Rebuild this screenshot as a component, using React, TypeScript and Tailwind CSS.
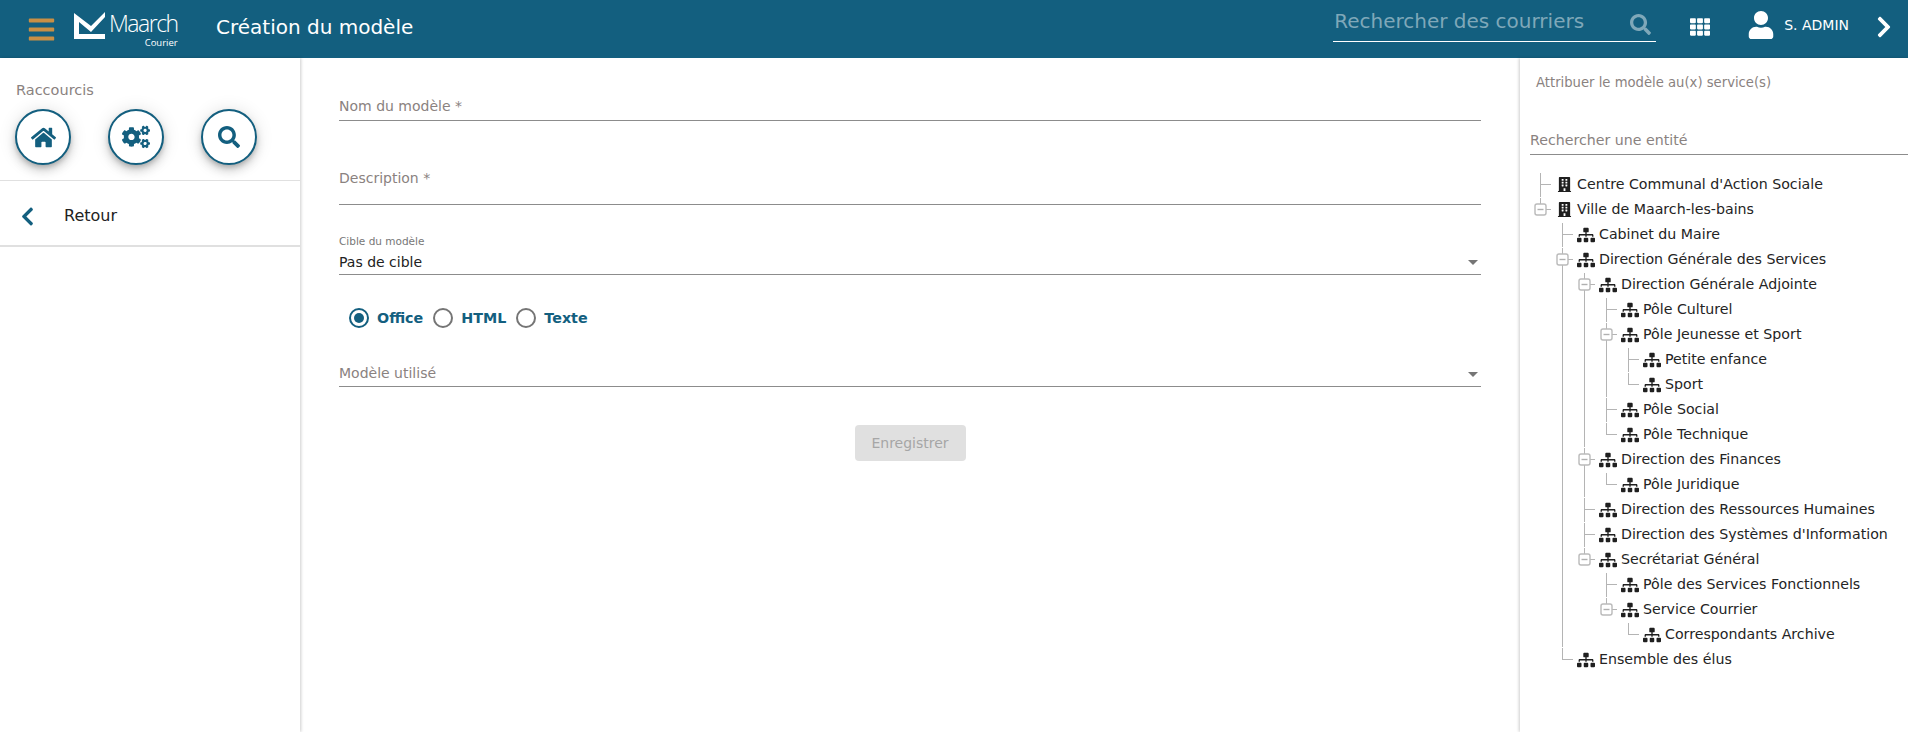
import React from "react";
import { FaBars, FaTh, FaUser, FaChevronRight, FaChevronLeft, FaSearch, FaHome, FaCogs, FaBuilding, FaSitemap } from "react-icons/fa";

type Node = { t: string; b?: boolean; c?: Node[] };

const tree: Node[] = [
  { t: "Centre Communal d'Action Sociale", b: true },
  {
    t: "Ville de Maarch-les-bains",
    b: true,
    c: [
      { t: "Cabinet du Maire" },
      {
        t: "Direction Générale des Services",
        c: [
          {
            t: "Direction Générale Adjointe",
            c: [
              { t: "Pôle Culturel" },
              { t: "Pôle Jeunesse et Sport", c: [{ t: "Petite enfance" }, { t: "Sport" }] },
              { t: "Pôle Social" },
              { t: "Pôle Technique" },
            ],
          },
          { t: "Direction des Finances", c: [{ t: "Pôle Juridique" }] },
          { t: "Direction des Ressources Humaines" },
          { t: "Direction des Systèmes d'Information" },
          {
            t: "Secrétariat Général",
            c: [
              { t: "Pôle des Services Fonctionnels" },
              { t: "Service Courrier", c: [{ t: "Correspondants Archive" }] },
            ],
          },
        ],
      },
      { t: "Ensemble des élus" },
    ],
  },
];

function Connector({ last, open }: { last: boolean; open: boolean }) {
  return (
    <svg width="22" height="25" className="shrink-0 block" fill="none">
      <path d={last ? "M11.5 1V13" : "M11.5 1V25"} stroke="#b4b4b4" />
      <path d="M11.5 12.5H23" stroke="#b4b4b4" />
      {open && (
        <g>
          <rect x="6" y="7" width="11" height="11" rx="2" fill="#fff" stroke="#bababa" strokeWidth="1.4" />
          <path d="M8.5 12.5H14.5" stroke="#b0b0b0" strokeWidth="1.4" />
        </g>
      )}
    </svg>
  );
}

function Guide({ on }: { on: boolean }) {
  return (
    <svg width="22" height="25" className="shrink-0 block" fill="none">
      {on && <path d="M11.5 0V25" stroke="#b4b4b4" />}
    </svg>
  );
}

function Rows({ nodes, guides }: { nodes: Node[]; guides: boolean[] }) {
  return (
    <>
      {nodes.map((n, i) => {
        const last = i === nodes.length - 1;
        return (
          <React.Fragment key={n.t}>
            <div className="flex items-center h-[25px]">
              {guides.map((g, k) => (
                <Guide key={k} on={g} />
              ))}
              <Connector last={last} open={!!n.c} />
              <span className="ml-1 mr-1 w-[18px] flex justify-center shrink-0 text-[#1f1f1f]">
                {n.b ? <FaBuilding size={15} /> : <FaSitemap size={18} />}
              </span>
              <span className="text-[14.2px] text-[#242424] whitespace-nowrap">{n.t}</span>
            </div>
            {n.c && <Rows nodes={n.c} guides={[...guides, !last]} />}
          </React.Fragment>
        );
      })}
    </>
  );
}

function Shortcut({ children }: { children: React.ReactNode }) {
  return (
    <div className="w-[56px] h-[56px] rounded-full bg-white border-2 border-[#135f7f] flex items-center justify-center text-[#135f7f] shadow-[0_3px_5px_-1px_rgba(0,0,0,0.2),0_6px_10px_0_rgba(0,0,0,0.14),0_1px_18px_0_rgba(0,0,0,0.12)]">
      {children}
    </div>
  );
}

function Caret() {
  return <span className="w-0 h-0 border-x-[5px] border-x-transparent border-t-[5px] border-t-[#757575] mr-[3px]" />;
}

function Radio({ label, on }: { label: string; on?: boolean }) {
  return (
    <div className="flex items-center">
      <span className={"w-[20px] h-[20px] rounded-full border-2 flex items-center justify-center " + (on ? "border-[#135f7f]" : "border-[#757575]")}>
        {on && <span className="w-[10px] h-[10px] rounded-full bg-[#135f7f]" />}
      </span>
      <span className="ml-[8px] mt-[1px] text-[14.3px] font-bold text-[#135f7f]">{label}</span>
    </div>
  );
}

export default function App() {
  return (
    <div className="h-[732px] w-[1908px] overflow-hidden flex flex-col bg-white font-['DejaVu_Sans',sans-serif]">
      <header className="h-[58px] shrink-0 bg-[#135f7f] flex items-center text-white">
        <FaBars size={29} className="ml-[27px] text-[#c98f45] shrink-0" />
        <div className="ml-[18px] flex items-start w-[107px] shrink-0 h-[40px]">
          <svg width="34" height="28" viewBox="0 0 34 28" className="mt-[3px] shrink-0" fill="#fff">
            <path d="M0 1 L17 14 L31 0 L31 5 L17 20 L5 10 L5 22 L31 22 L31 27 L0 27 Z" />
          </svg>
          <div className="ml-[1px] flex flex-col items-end font-['Open_Sans',sans-serif] font-light leading-none">
            <span className="text-[23px] tracking-[-1.5px] leading-[28px]">Maarch</span>
            <span className="text-[9.5px] leading-[10px] mt-[1px] font-normal">Courier</span>
          </div>
        </div>
        <h1 className="ml-[35px] mb-[4px] text-[20px] font-normal">Création du modèle</h1>
        <div className="ml-auto flex items-center mb-[5px]">
          <div className="w-[323px] h-[34px] mb-[3px] border-b border-white flex items-center justify-between pr-[5px]">
            <span className="text-[20px] leading-[30px] text-[#7fa8b9] mb-[8px] ml-[1px]">Rechercher des courriers</span>
            <FaSearch size={21} className="text-[#7fa8b9] mb-[1px]" />
          </div>
          <FaTh size={20} className="ml-[34px]" />
          <FaUser size={28} className="ml-[37px] mb-[3px]" />
          <span className="ml-[9px] text-[14px] mb-[2px]">S. ADMIN</span>
          <FaChevronRight size={24} className="ml-[23px] mr-[12px]" />
        </div>
      </header>

      <div className="flex-1 flex min-h-0">
        <aside className="w-[300px] shrink-0 shadow-[1px_0_3px_rgba(0,0,0,0.2)] z-10 bg-white">
          <div className="h-[123px] border-b border-[#e0e0e0] pl-[15px] pt-[24px]">
            <div className="text-[14.5px] leading-[16px] text-[#8a8280] pl-px">Raccourcis</div>
            <div className="flex gap-[37px] mt-[11px]">
              <Shortcut><FaHome size={25} /></Shortcut>
              <Shortcut><FaCogs size={28} /></Shortcut>
              <Shortcut><FaSearch size={22} /></Shortcut>
            </div>
          </div>
          <div className="h-[66px] border-b-2 border-[#e0e0e0] flex items-center pt-[6px]">
            <FaChevronLeft size={21} className="ml-[17px] text-[#135f7f]" />
            <span className="ml-[26px] text-[16px] text-[#222]">Retour</span>
          </div>
        </aside>

        <main className="flex-1 pl-[39px] pr-[39px] min-w-0">
          <div className="h-[63px] border-b border-[#8c8c8c] flex items-end pb-[3px]">
            <span className="text-[14px] text-[#8a8280]">Nom du modèle *</span>
          </div>
          <div className="h-[84px] border-b border-[#8c8c8c] pt-[45px]">
            <span className="text-[14px] text-[#8a8280]">Description *</span>
          </div>
          <div className="h-[70px] border-b border-[#8c8c8c] pt-[29px] flex flex-col">
            <span className="text-[10.5px] leading-[14px] text-[#777]">Cible du modèle</span>
            <div className="flex items-center justify-between mt-[5px]">
              <span className="text-[14px] leading-[18px] text-[#222]">Pas de cible</span>
              <Caret />
            </div>
          </div>
          <div className="flex items-center gap-[10px] pl-[10px] mt-[33px] h-[20px]">
            <Radio label="Office" on />
            <Radio label="HTML" />
            <Radio label="Texte" />
          </div>
          <div className="h-[59px] border-b border-[#8c8c8c] flex items-end justify-between pb-[2px]">
            <span className="text-[14px] text-[#8a8280]">Modèle utilisé</span>
            <span className="pb-[7px] flex"><Caret /></span>
          </div>
          <div className="flex justify-center mt-[38px]">
            <button className="w-[111px] h-[36px] rounded bg-[#e0e0e0] text-[14px] text-[#a6a6a6]">Enregistrer</button>
          </div>
        </main>

        <aside className="w-[388px] shrink-0 shadow-[-1px_0_3px_rgba(0,0,0,0.2)] z-10 bg-white pl-[10px]">
          <div className="pl-[6px] pt-[17px] text-[13.2px] leading-[16px] text-[#8a8280]">Attribuer le modèle au(x) service(s)</div>
          <div className="mt-[41px] h-[23px] border-b border-[#8c8c8c] text-[14.2px] leading-[16px] text-[#8a8280]">Rechercher une entité</div>
          <div className="mt-[17px] -ml-[1px]">
            <Rows nodes={tree} guides={[]} />
          </div>
        </aside>
      </div>
    </div>
  );
}
